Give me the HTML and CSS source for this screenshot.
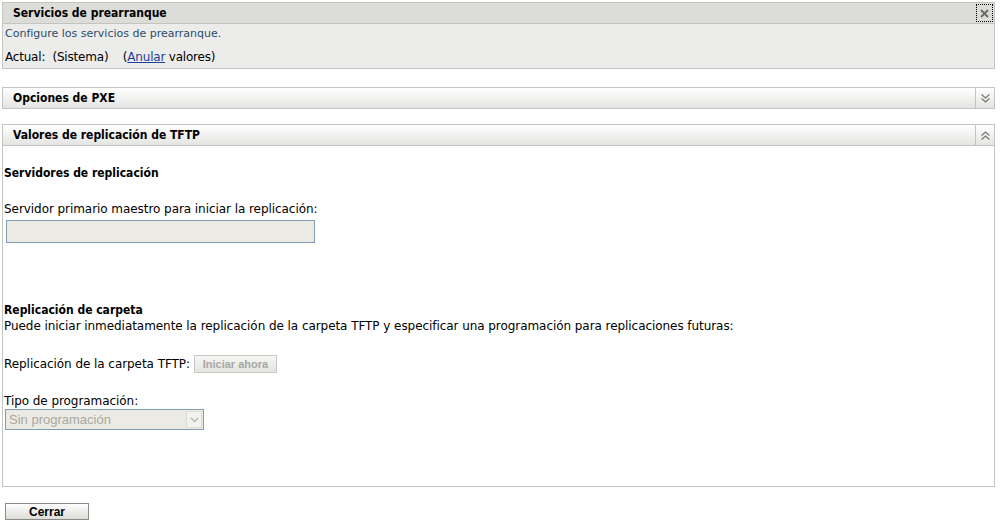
FILE: index.html
```html
<!DOCTYPE html>
<html lang="es">
<head>
    <meta charset="UTF-8">
    <title>Servicios de prearranque</title>
    <link rel="stylesheet" href="styles.css">
</head>
<body>
    <!-- Panel principal -->
    <div class="panel panel-main">
        <div class="panel-head head-main">
            <span class="panel-title">Servicios de prearranque</span>
            <span class="btn-close">
                <svg width="13" height="13" viewBox="0 0 13 13"><path d="M3 3 L10 10 M10 3 L3 10" stroke="#6b6b6b" stroke-width="2"/></svg>
            </span>
        </div>
        <div class="panel-body body-main">
            <div class="desc">Configure los servicios de prearranque.</div>
            <div class="actual">Actual:&nbsp;&nbsp;(Sistema)&nbsp;&nbsp;&nbsp;&nbsp;(<a href="#">Anular</a> valores)</div>
        </div>
    </div>

    <!-- Opciones de PXE (contraído) -->
    <div class="panel panel-pxe">
        <div class="panel-head">
            <span class="panel-title">Opciones de PXE</span>
            <span class="toggle">
                <svg width="11" height="11" viewBox="0 0 11 11"><path d="M1.5 1.5 L5.5 5 L9.5 1.5 M1.5 5.5 L5.5 9 L9.5 5.5" stroke="#777" stroke-width="1.3" fill="none"/></svg>
            </span>
        </div>
    </div>

    <!-- Valores de replicación de TFTP -->
    <div class="panel panel-tftp">
        <div class="panel-head">
            <span class="panel-title">Valores de replicación de TFTP</span>
            <span class="toggle">
                <svg width="11" height="11" viewBox="0 0 11 11"><path d="M1.5 5.5 L5.5 2 L9.5 5.5 M1.5 9.5 L5.5 6 L9.5 9.5" stroke="#777" stroke-width="1.3" fill="none"/></svg>
            </span>
        </div>
        <div class="panel-body body-tftp">
            <h3 class="sec-title first">Servidores de replicación</h3>
            <label class="lbl" for="primario">Servidor primario maestro para iniciar la replicación:</label>
            <input type="text" id="primario" class="txt" disabled>

            <h3 class="sec-title second">Replicación de carpeta</h3>
            <div class="lbl">Puede iniciar inmediatamente la replicación de la carpeta TFTP y especificar una programación para replicaciones futuras:</div>

            <div class="row-rep">
                <span>Replicación de la carpeta TFTP:</span>
                <button class="btn-now" disabled>Iniciar ahora</button>
            </div>

            <label class="lbl lbl-tipo" for="tipo">Tipo de programación:</label>
            <div class="select">
                <span>Sin programación</span>
                <span class="select-arrow">
                    <svg width="9" height="6" viewBox="0 0 9 6"><path d="M1 1 L4.5 4.5 L8 1" stroke="#b5b5b5" stroke-width="1.4" fill="none"/></svg>
                </span>
            </div>
        </div>
    </div>

    <button class="btn-cerrar">Cerrar</button>
</body>
</html>
```
FILE: styles.css
```css
body {
    margin: 0;
    padding: 2px 7px 0 2px;
    font-family: "DejaVu Sans", sans-serif;
    font-size: 12px;
    letter-spacing: -0.06px;
    color: #000;
    background: #fff;
}

.panel {
    border: 1px solid #c4c4c0;
}

.panel-head {
    display: flex;
    align-items: center;
    height: 20px;
    background: linear-gradient(#ffffff, #e4e4e2);
    border-bottom: 1px solid #c4c4c0;
}

.panel-title {
    flex: 1;
    padding-left: 10px;
    font-family: "DejaVu Sans Condensed", "DejaVu Sans", sans-serif;
    font-weight: bold;
    font-size: 12px;
    letter-spacing: 0;
}

.head-main {
    background: #dcddd8;
}

.btn-close {
    width: 15px;
    height: 16px;
    margin-right: 1px;
    border: 1px dotted #000;
    display: flex;
    align-items: center;
    justify-content: center;
}

.body-main {
    background: #ececea;
    height: 44px;
    padding-left: 2px;
}

.desc {
    font-size: 11px;
    letter-spacing: 0;
    color: #2b4c6e;
    line-height: 20px;
    margin-bottom: 3px;
}

.actual {
    line-height: 20px;
    letter-spacing: -0.2px;
}

.actual a {
    color: #1a3f9b;
}

.panel-pxe {
    margin-top: 18px;
}

.panel-pxe .panel-head {
    border-bottom: none;
}

.toggle {
    width: 18px;
    height: 100%;
    border-left: 1px solid #c4c4c0;
    display: flex;
    align-items: center;
    justify-content: center;
}

.panel-tftp {
    margin-top: 15px;
}

.body-tftp {
    height: 340px;
    padding-left: 1px;
}

.sec-title {
    margin: 0;
    font-family: "DejaVu Sans Condensed", "DejaVu Sans", sans-serif;
    font-size: 12px;
    font-weight: bold;
    letter-spacing: 0;
    line-height: 16px;
}

.sec-title.first {
    padding-top: 19px;
}

.sec-title.second {
    padding-top: 59px;
}

.lbl {
    display: block;
    line-height: 16px;
}

.sec-title.first + .lbl {
    margin-top: 20px;
}

.txt {
    display: block;
    width: 309px;
    height: 23px;
    margin: 3px 0 0 2px;
    box-sizing: border-box;
    border: 1px solid #7f9db9;
    background: #ecebe3;
}

.row-rep {
    display: flex;
    align-items: center;
    gap: 4px;
    margin-top: 21px;
    height: 18px;
}

.btn-now {
    font-family: "Liberation Sans", Arial, sans-serif;
    font-weight: bold;
    font-size: 11px;
    letter-spacing: 0;
    color: #a7a7a4;
    width: 83px;
    height: 18px;
    padding: 0;
    background: linear-gradient(#f6f6f4, #e4e4e0);
    border: 1px solid #c8c8c4;
}

.lbl-tipo {
    margin-top: 20px;
}

.select {
    display: flex;
    align-items: center;
    justify-content: space-between;
    width: 199px;
    height: 21px;
    margin: 0 0 0 1px;
    box-sizing: border-box;
    border: 1px solid #7f9db9;
    background: #ecebe3;
    font-family: "Liberation Sans", Arial, sans-serif;
    font-size: 13px;
    letter-spacing: 0;
    color: #a8a8a2;
    padding-left: 3px;
}

.select-arrow {
    width: 16px;
    height: 17px;
    margin-right: 1px;
    background: #f2f2ee;
    border: 1px solid #dcdcd6;
    box-sizing: border-box;
    display: flex;
    align-items: center;
    justify-content: center;
}

.btn-cerrar {
    display: block;
    margin: 16px 0 0 3px;
    width: 84px;
    height: 17px;
    padding: 0;
    font-family: "Liberation Sans", Arial, sans-serif;
    font-weight: bold;
    font-size: 12px;
    letter-spacing: 0;
    color: #000;
    background: linear-gradient(#ffffff, #dcdcd8);
    border: 1px solid #8a8a86;
}
```
